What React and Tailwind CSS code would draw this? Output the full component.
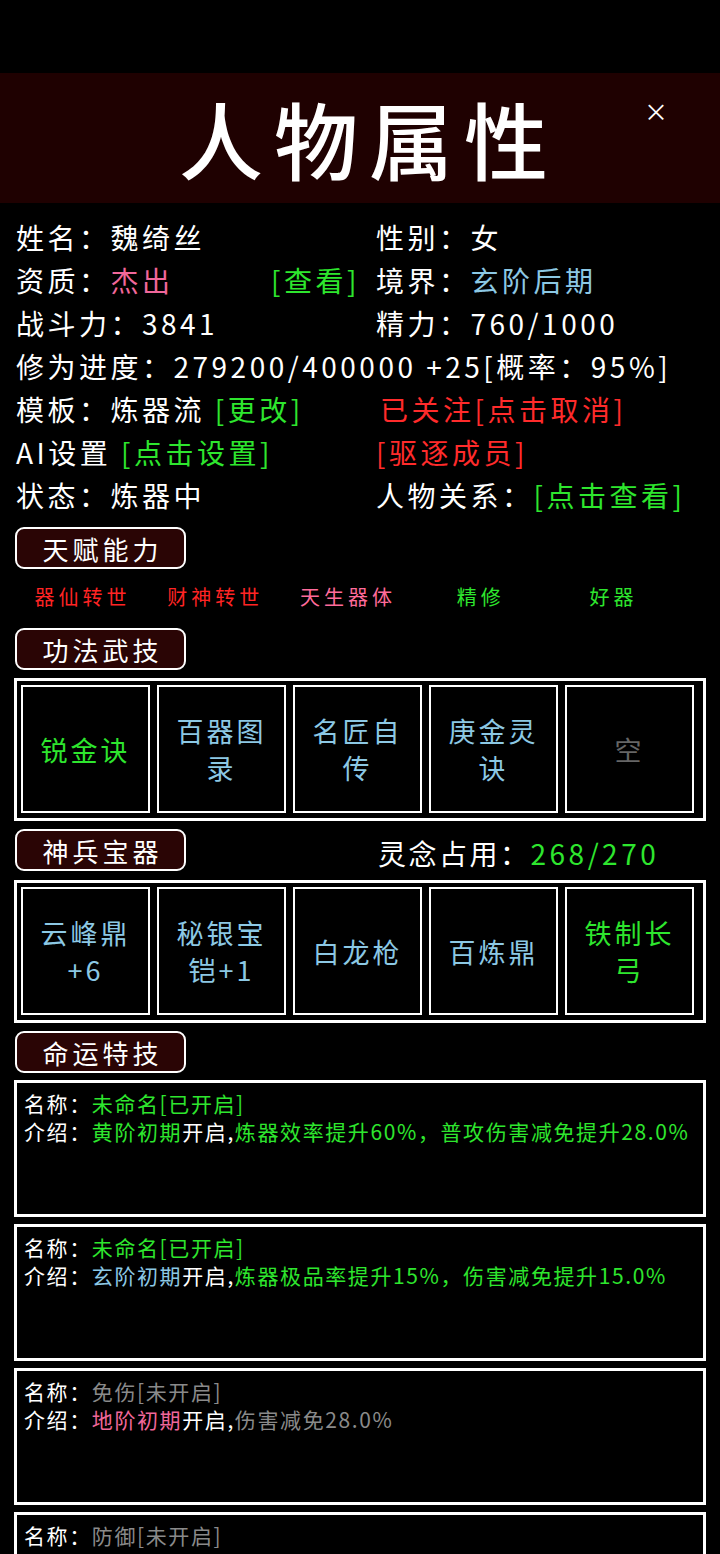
const FONT = { fontFamily: '"Noto Sans CJK SC", "Noto Sans", sans-serif' }

const G = 'text-[#2ee62e]'
const B = 'text-[#8cc8e4]'
const PINK = 'text-[#f0679a]'
const RED = 'text-[#ff2b2b]'
const GRAY = 'text-[#8a8a8a]'

const talents = [
  { name: '器仙转世', color: 'text-[#ff2424]' },
  { name: '财神转世', color: 'text-[#ff2424]' },
  { name: '天生器体', color: 'text-[#ff6b9b]' },
  { name: '精修', color: G },
  { name: '好器', color: G },
]

const skills = [
  { name: '锐金诀', color: G },
  { name: '百器图录', color: B },
  { name: '名匠自传', color: B },
  { name: '庚金灵诀', color: B },
  { name: '空', color: 'text-[#666666]' },
]

const weapons = [
  { name: '云峰鼎+6', color: B },
  { name: '秘银宝铠+1', color: B },
  { name: '白龙枪', color: B },
  { name: '百炼鼎', color: B },
  { name: '铁制长弓', color: G },
]

const fates = [
  { name: '未命名[已开启]', nameColor: G, stage: '黄阶初期', stageColor: G, desc: '炼器效率提升60%，普攻伤害减免提升28.0%', descColor: G },
  { name: '未命名[已开启]', nameColor: G, stage: '玄阶初期', stageColor: B, desc: '炼器极品率提升15%，伤害减免提升15.0%', descColor: G },
  { name: '免伤[未开启]', nameColor: GRAY, stage: '地阶初期', stageColor: PINK, desc: '伤害减免28.0%', descColor: GRAY },
  { name: '防御[未开启]', nameColor: GRAY, stage: '天阶初期', stageColor: 'text-[#f0a030]', desc: '防御提升30.0%', descColor: GRAY },
]

function Pill({ children }) {
  return (
    <div className="ml-[15px] flex h-[42px] w-[171px] shrink-0 items-center justify-center rounded-[9px] border-2 border-white bg-[#2a0505] pl-[4px] text-[26px] tracking-[4px] text-white">
      {children}
    </div>
  )
}

function SlotBox({ items }) {
  return (
    <div className="ml-[14px] w-[692px] border-[3px] border-white px-[4px] pt-[4px] pb-[5px]">
      <div className="flex gap-[7px]">
        {items.map((item) => (
          <div
            key={item.name}
            className={`flex h-[128px] w-[129px] items-center justify-center border-2 border-white px-[12px] text-center text-[27px] leading-[37px] tracking-[3px] ${item.color}`}
          >
            {item.name}
          </div>
        ))}
      </div>
    </div>
  )
}

export default function App() {
  return (
    <div className="min-h-[1554px] w-[720px] overflow-hidden bg-black text-white" style={FONT}>
      <div className="h-[73px]" />
      <header className="relative flex h-[130px] items-center justify-center bg-[#1f0101]">
        <h1 className="pl-[18px] text-[84px] font-medium leading-none tracking-[11px]">人物属性</h1>
        <span className="absolute right-[52px] top-[26px] text-[24px] leading-none">×</span>
      </header>

      <section className="mt-[13px] grid grid-cols-[360px_1fr] text-[28px] leading-[43px] tracking-[3.5px]">
        <div className="pl-[16px]">姓名：魏绮丝</div>
        <div className="pl-[16px]">性别：女</div>

        <div className="flex justify-between pl-[16px]">
          <span>资质：<span className={PINK}>杰出</span></span>
          <span className={G}>[查看]</span>
        </div>
        <div className="pl-[16px]">境界：<span className={B}>玄阶后期</span></div>

        <div className="pl-[16px]">战斗力：3841</div>
        <div className="pl-[16px]">精力：760/1000</div>

        <div className="col-span-2 whitespace-nowrap pl-[16px]">修为进度：279200/400000 +25[概率：95%]</div>

        <div className="pl-[16px]">模板：炼器流 <span className={G}>[更改]</span></div>
        <div className={`pl-[20px] ${RED}`}>已关注[点击取消]</div>

        <div className="pl-[16px]">AI设置 <span className={G}>[点击设置]</span></div>
        <div className={`pl-[16px] ${RED}`}>[驱逐成员]</div>

        <div className="pl-[16px]">状态：炼器中</div>
        <div className="pl-[16px]">人物关系：<span className={G}>[点击查看]</span></div>
      </section>

      <div className="mt-[10px]">
        <Pill>天赋能力</Pill>
      </div>

      <div className="mt-[9px] grid h-[38px] w-[680px] grid-cols-5 pl-[16px] text-[20px] tracking-[4px]">
        {talents.map((t) => (
          <div key={t.name} className={`flex items-center justify-center ${t.color}`}>
            {t.name}
          </div>
        ))}
      </div>

      <div className="mt-[12px]">
        <Pill>功法武技</Pill>
      </div>
      <div className="mt-[8px]">
        <SlotBox items={skills} />
      </div>

      <div className="mt-[8px] flex h-[42px] items-center">
        <Pill>神兵宝器</Pill>
        <div className="ml-[192px] mt-[6px] whitespace-nowrap text-[28px] leading-none tracking-[2.5px]">
          灵念占用：<span className={`${G} tracking-[3.5px]`}>268/270</span>
        </div>
      </div>
      <div className="mt-[9px]">
        <SlotBox items={weapons} />
      </div>

      <div className="mt-[8px]">
        <Pill>命运特技</Pill>
      </div>

      <div className="mt-[7px] flex flex-col gap-[7px]">
        {fates.map((f, i) => (
          <div key={i} className="ml-[14px] h-[137px] w-[692px] border-[3px] border-white px-[7px] pt-[6px] text-[21px] leading-[28px] tracking-[1.6px]">
            <div>
              名称：<span className={f.nameColor}>{f.name}</span>
            </div>
            <div className="whitespace-nowrap">
              介绍：<span className={f.stageColor}>{f.stage}</span>开启,<span className={f.descColor}>{f.desc}</span>
            </div>
          </div>
        ))}
      </div>
    </div>
  )
}
